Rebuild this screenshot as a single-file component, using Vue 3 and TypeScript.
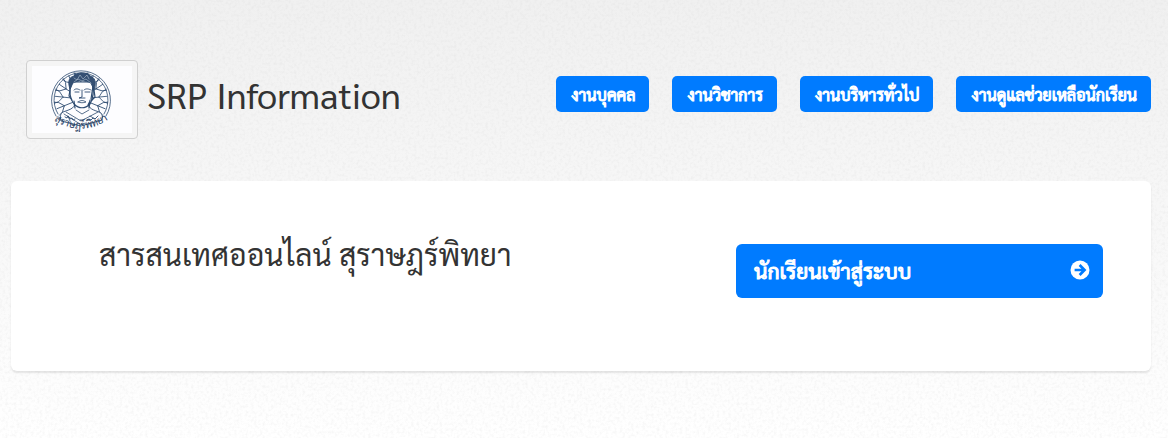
<script setup lang="ts">
interface MenuItem {
  label: string
}

const menu: MenuItem[] = [
  { label: 'งานบุคคล' },
  { label: 'งานวิชาการ' },
  { label: 'งานบริหารทั่วไป' },
  { label: 'งานดูแลช่วยเหลือนักเรียน' },
]

// Branches of the wheel behind the bust, spread around the rim
const spokes: number[] = [-112, -84, -56, -28, 0, 28, 56, 84, 112]
</script>

<template>
  <div class="page">
    <svg class="grain" aria-hidden="true">
      <filter id="paper" x="0" y="0" width="100%" height="100%">
        <feTurbulence type="fractalNoise" baseFrequency="0.35" numOctaves="2" seed="4" />
        <feColorMatrix type="matrix" values="0 0 0 0 0.5  0 0 0 0 0.5  0 0 0 0 0.5  0.3 0 0 0 -0.13" />
      </filter>
      <rect width="100%" height="100%" filter="url(#paper)" />
    </svg>

    <header class="header">
      <div class="brand">
        <div class="thumb">
          <svg class="logo" viewBox="0 0 100 67" role="img" aria-label="สุราษฎร์พิทยา">
            <g fill="none" stroke="#2d4b70" stroke-linecap="round" stroke-linejoin="round">
              <path d="M24 50A29.500 29.500 0 1 1 74 50" stroke-width=".8" />
              <path d="M26 48A27 27 0 1 1 72 48" stroke-width=".8" />
              <g v-for="a in spokes" :key="a" :transform="`rotate(${a} 49 33)`" stroke-width=".8">
                <path d="M49 24V15L44 11L42 7M49 15L54 11L56 7M49 15V7" />
              </g>
              <path
                d="M43 37C43 43 36 44 31 46C28 48 28 51 29 55L49 60L70 54C71 50 70 47 67 46C62 44 56 43 56 37Z"
                fill="#fdfdff"
                stroke-width=".9"
              />
              <path d="M34 46L49 55L66 46M32 48L48 58M44 44L50 48L57 44M58 50L63 53M36 50L38 55" stroke-width=".8" />
              <path d="M39 16C37 25 38 33 42 38C47 43 53 43 58 38C61 33 62 25 61 16Z" fill="#fdfdff" stroke-width="1.2" />
              <path
                d="M38 23C35 14 38 11 42 10C44 6 56 6 58 10C62 11 65 15 62 24L59 17C53 14 46 14 41 17Z"
                fill="#344f73"
                stroke-width="1"
              />
              <path d="M42 12L45 14L48 9L51 13L55 9L57 13M42 16L46 13L50 15L54 13L59 17" stroke="#b5c4d3" stroke-width=".6" />
              <path d="M42 24C44 22 46 23 48 24M52 24C54 22 57 23 59 24M43 26H47M53 26H58M50 24V31L47 32H53" stroke-width=".9" />
              <path d="M46 36C49 34 51 34 54 36C51 37 49 37 46 36" stroke-width=".8" />
              <path d="M38 24L37 30L40 34M62 24L63 31L60 34M42 35L43 42M58 34L57 42M61 20L59 33M58 35L56 39" stroke-width="1.2" />
              <path d="M33 51L35 52L36 50L38 53L40 52L41 54L43 53M48 54H51M55 54L57 53L59 54L61 52L63 53L66 50" stroke-width=".9" />
            </g>
            <path id="school" d="M21 54Q50 72 77 53" fill="none" />
            <text fill="#1d3b60" font-size="10">
              <textPath href="#school" startOffset="50%" text-anchor="middle">สุราษฎร์พิทยา</textPath>
            </text>
          </svg>
        </div>
        <h1 class="title">SRP Information</h1>
      </div>
      <nav class="menu">
        <button v-for="item in menu" :key="item.label" type="button" class="btn">
          {{ item.label }}
        </button>
      </nav>
    </header>

    <main class="card">
      <h2 class="heading">สารสนเทศออนไลน์ สุราษฎร์พิทยา</h2>
      <button type="button" class="btn login">
        <span>นักเรียนเข้าสู่ระบบ</span>
        <svg class="arrow" viewBox="0 0 20 20" aria-hidden="true">
          <circle cx="10" cy="10" r="9.500" fill="#fff" />
          <path d="M4.600 10H14M9.600 5L14.600 10L9.600 15" fill="none" stroke="#007bff" stroke-width="2.600" />
        </svg>
      </button>
    </main>
  </div>
</template>

<style>
body {
  margin: 0;
}
</style>

<style scoped>
.page {
  position: relative;
  z-index: 0;
  box-sizing: border-box;
  min-height: 100vh;
  padding: 60px 17px 64px 11px;
  background: linear-gradient(#f0f0f0, #ffffff);
  color: #333;
  font-family: Sarabun, 'Noto Sans CJK SC', 'Noto Sans Thai', sans-serif;
}

.grain {
  position: absolute;
  inset: 0;
  z-index: -1;
  width: 100%;
  height: 100%;
}

.header {
  display: flex;
  align-items: flex-start;
  justify-content: space-between;
  padding-left: 15px;
  margin-bottom: 42px;
}

.brand {
  display: flex;
  align-items: flex-start;
  gap: 9px;
}

.thumb {
  box-sizing: border-box;
  padding: 5px;
  border: 1px solid #d0d0d0;
  border-radius: 4px;
  background: #f5f5f5;
}

.logo {
  display: block;
  width: 100px;
  height: 67px;
  background: #fdfdff;
}

.title {
  margin: 14px 0 0;
  font-size: 36px;
  font-weight: 400;
  line-height: 40px;
  white-space: nowrap;
}

.menu {
  display: flex;
  gap: 23px;
  padding-top: 16px;
}

.btn {
  box-sizing: border-box;
  height: 36px;
  padding: 0 14px 0 15px;
  border: 0;
  border-radius: 5px;
  background: #007bff;
  color: #fff;
  font-family: inherit;
  font-size: 16px;
  font-weight: 400;
  -webkit-text-stroke: 1px #fff;
  white-space: nowrap;
  cursor: pointer;
}

.card {
  display: flex;
  align-items: flex-start;
  justify-content: space-between;
  box-sizing: border-box;
  min-height: 190px;
  padding: 53px 48px 48px 88px;
  border-radius: 6px;
  background: #fff;
  box-shadow: 0 2px 2px rgba(0, 0, 0, 0.1);
}

.heading {
  margin: 0;
  font-size: 30px;
  font-weight: 400;
  line-height: 40px;
  white-space: nowrap;
}

.login {
  display: flex;
  align-items: center;
  justify-content: space-between;
  flex: 0 0 367px;
  height: 54px;
  margin-top: 10px;
  padding: 0 13px 2px 18px;
  border-radius: 6px;
  font-size: 21px;
}

.arrow {
  width: 20px;
  height: 20px;
}
</style>
